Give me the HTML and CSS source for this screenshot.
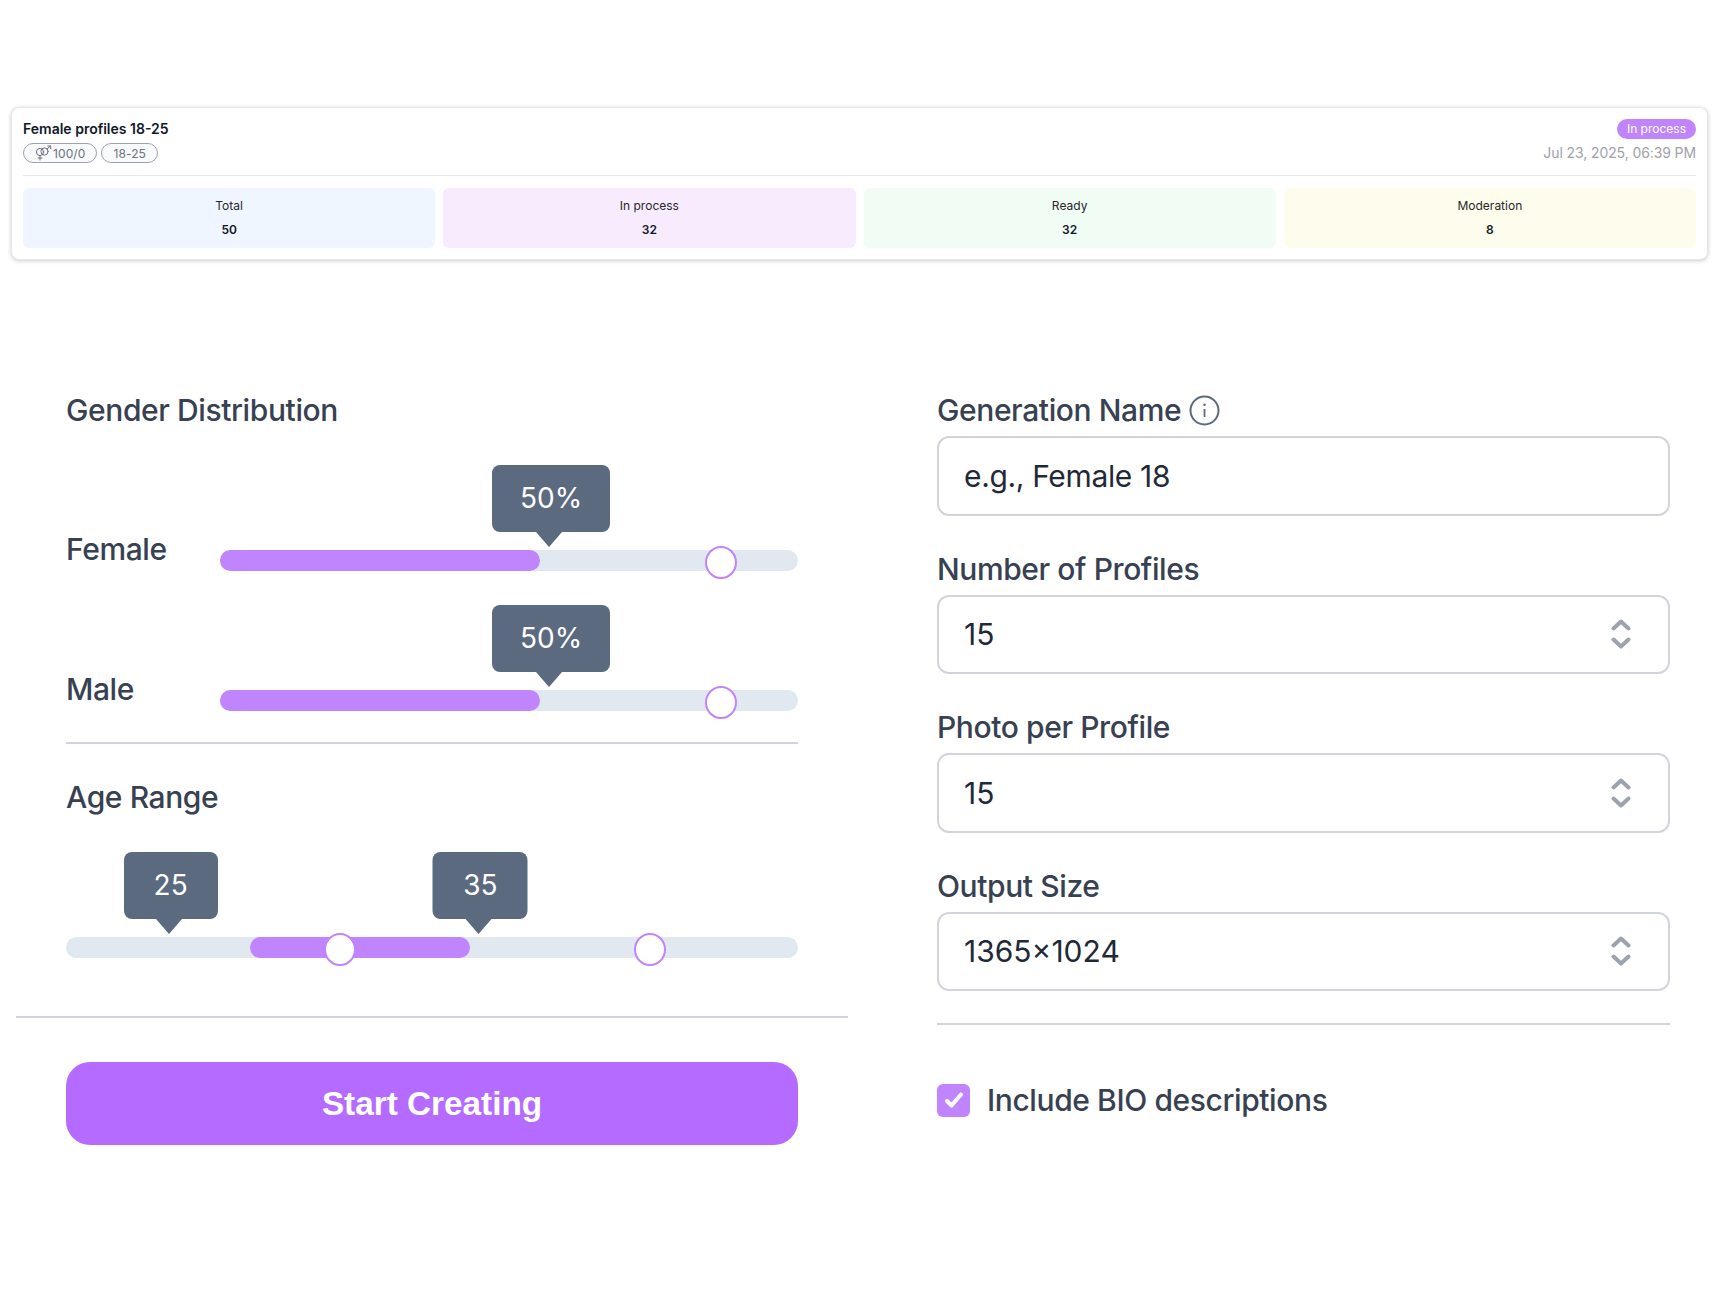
FILE: index.html
```html
<!DOCTYPE html>
<html lang="en">
<head>
	<meta charset="UTF-8">
	<title>Generation</title>
	<link rel="stylesheet" href="styles.css">
</head>
<body>
	<div class="card">
		<div class="card-head">
			<div class="card-info">
				<div class="card-title">Female profiles 18-25</div>
				<div class="tags">
					<span class="tag">
						<svg class="tag-icon" width="17" height="16" viewBox="0 0 17 16" fill="none" stroke="currentColor" stroke-width="1" stroke-linecap="round">
							<circle cx="5" cy="7" r="3.6"/>
							<circle cx="9.5" cy="6.5" r="3.6"/>
							<path d="M5 10.6V15M3 13h4M12 4l3.5-3M12.8 1h2.9v2.8"/>
						</svg>100/0</span>
					<span class="tag">18-25</span>
				</div>
			</div>
			<div class="card-meta">
				<span class="badge">In process</span>
				<span class="date">Jul 23, 2025, 06:39 PM</span>
			</div>
		</div>
		<div class="stats">
			<div class="stat stat-blue"><span class="stat-label">Total</span><b class="stat-value">50</b></div>
			<div class="stat stat-purple"><span class="stat-label">In process</span><b class="stat-value">32</b></div>
			<div class="stat stat-green"><span class="stat-label">Ready</span><b class="stat-value">32</b></div>
			<div class="stat stat-yellow"><span class="stat-label">Moderation</span><b class="stat-value">8</b></div>
		</div>
	</div>

	<div class="form">
		<div class="form-left">
			<div class="heading">Gender Distribution</div>
			<div class="slider-row slider-first">
				<div class="slider-label">Female</div>
				<div class="track">
					<div class="fill" style="left:0;width:55.3%"></div>
					<div class="tip" style="left:57.3%;width:118px">50%</div>
					<div class="thumb" style="left:86.6%"></div>
				</div>
			</div>
			<div class="slider-row slider-second">
				<div class="slider-label">Male</div>
				<div class="track">
					<div class="fill" style="left:0;width:55.3%"></div>
					<div class="tip" style="left:57.3%;width:118px">50%</div>
					<div class="thumb" style="left:86.6%"></div>
				</div>
			</div>
			<div class="line gender-line"></div>

			<div class="heading age-heading">Age Range</div>
			<div class="track age-track">
				<div class="fill" style="left:25.1%;width:30.1%"></div>
				<div class="tip" style="left:14.3%;width:94px">25</div>
				<div class="tip" style="left:56.6%;width:95px">35</div>
				<div class="thumb" style="left:37.4%"></div>
				<div class="thumb" style="left:79.8%"></div>
			</div>
			<div class="line wide-line"></div>
			<button class="start-btn">Start Creating</button>
		</div>

		<div class="form-right">
			<div class="field">
				<label class="field-label">Generation Name
					<svg class="info" width="31" height="31" viewBox="0 0 31 31" fill="none" stroke="#5b6a7f" stroke-width="2">
						<circle cx="15.5" cy="15.5" r="14"/>
						<path d="M15.5 14v8" stroke-width="1.8"/>
						<circle cx="15.5" cy="9.7" r="1.2" fill="#5b6a7f" stroke="none"/>
					</svg>
				</label>
				<div class="input input-name">e.g., Female 18</div>
			</div>
			<div class="field">
				<label class="field-label">Number of Profiles</label>
				<div class="input">15
					<svg class="updown" width="20" height="32" viewBox="0 0 20 32" fill="none" stroke="#9ca3af" stroke-width="4" stroke-linecap="round" stroke-linejoin="round"><path d="M2.5 10.5L10 3.5l7.5 7M2.5 21.5l7.5 7 7.5-7"/></svg>
				</div>
			</div>
			<div class="field">
				<label class="field-label">Photo per Profile</label>
				<div class="input">15
					<svg class="updown" width="20" height="32" viewBox="0 0 20 32" fill="none" stroke="#9ca3af" stroke-width="4" stroke-linecap="round" stroke-linejoin="round"><path d="M2.5 10.5L10 3.5l7.5 7M2.5 21.5l7.5 7 7.5-7"/></svg>
				</div>
			</div>
			<div class="field">
				<label class="field-label">Output Size</label>
				<div class="input">1365×1024
					<svg class="updown" width="20" height="32" viewBox="0 0 20 32" fill="none" stroke="#9ca3af" stroke-width="4" stroke-linecap="round" stroke-linejoin="round"><path d="M2.5 10.5L10 3.5l7.5 7M2.5 21.5l7.5 7 7.5-7"/></svg>
				</div>
			</div>
			<div class="line right-line"></div>
			<div class="check-row">
				<span class="check">
					<svg width="24" height="24" viewBox="0 0 24 24" fill="none" stroke="#fff" stroke-width="4" stroke-linecap="round" stroke-linejoin="round"><path d="M5 13l4.5 4.5L19 6.5"/></svg>
				</span>
				Include BIO descriptions
			</div>
		</div>
	</div>
</body>
</html>
```

FILE: styles.css
```css
*{padding: 0;margin: 0;box-sizing: border-box;}
html,body{
	background: #fff;
	font-family: Inter, "Noto Sans", sans-serif;
	color: #374151;
}
body{
	height: 1295px;
	overflow: hidden;
	padding-top: 107px;
}

/* top card */
.card{
	margin: 0 12px 0 11px;
	height: 153px;
	padding: 11px 11px 0;
	background: #fff;
	border: 1px solid #e5e7eb;
	border-radius: 8px;
	box-shadow: 0 1px 4px rgba(0,0,0,.2);
}
.card-head{
	display: flex;
	justify-content: space-between;
	height: 57px;
	border-bottom: 1px solid #e5e7eb;
}
.card-title{
	font-size: 14px;
	font-weight: 600;
	line-height: 20px;
	color: #111827;
}
.tags{
	display: flex;
	gap: 4px;
	margin-top: 4px;
}
.tag{
	display: flex;
	align-items: center;
	height: 20px;
	padding: 0 11px;
	font-size: 12px;
	letter-spacing: .1px;
	color: #6b7280;
	background: #f9fafb;
	border: 1px solid #9ca3af;
	border-radius: 10px;
}
.tag-icon{
	margin-right: 1px;
}
.card-meta{
	display: flex;
	flex-direction: column;
	align-items: flex-end;
	gap: 4px;
}
.badge{
	height: 20px;
	padding: 0 10px;
	font-size: 12px;
	line-height: 20px;
	color: #fff;
	background: #c084fc;
	border-radius: 10px;
}
.date{
	font-size: 14px;
	line-height: 20px;
	letter-spacing: -.1px;
	color: #a1a1aa;
}
.stats{
	display: grid;
	grid-template-columns: repeat(4, 1fr);
	gap: 8px;
	margin-top: 12px;
}
.stat{
	display: flex;
	flex-direction: column;
	align-items: center;
	gap: 8px;
	height: 60px;
	padding-top: 10px;
	border-radius: 6px;
	font-size: 12px;
	line-height: 16px;
}
.stat-label{
	color: #27272a;
}
.stat-value{
	font-weight: 600;
	color: #111827;
}
.stat-blue{background: #f0f6ff;}
.stat-purple{background: #f7ebfd;}
.stat-green{background: #f1fcf5;}
.stat-yellow{background: #fefcec;}

/* form */
.form{
	display: grid;
	grid-template-columns: 832px 733px;
	gap: 89px;
	margin: 132px 0 0 16px;
}
.form-left{
	padding: 0 50px;
}
.heading,.field-label,.slider-label,.check-row{
	font-size: 30px;
	font-weight: 500;
	line-height: 36px;
	letter-spacing: -.4px;
	color: #374151;
}
.age-heading{
	margin-top: 35px;
}
.slider-row{
	display: flex;
	justify-content: space-between;
	height: 39px;
}
.slider-first{
	margin-top: 104px;
}
.slider-second{
	margin-top: 100.5px;
}
.slider-label{
	margin-top: -1px;
}
.slider-row .track{
	align-self: flex-end;
	width: 578px;
}

.track{
	position: relative;
	height: 21px;
	background: #e2e8f0;
	border-radius: 11px;
}
.age-track{
	margin-top: 122px;
}
.fill{
	position: absolute;
	top: 0;
	bottom: 0;
	background: #c084fc;
	border-radius: 11px;
}
.thumb{
	position: absolute;
	top: -4px;
	width: 32px;
	height: 33px;
	margin-left: -16px;
	background: #fff;
	border: 2px solid #c084fc;
	border-radius: 50%;
}
.tip{
	position: absolute;
	bottom: 39px;
	height: 67px;
	transform: translateX(-50%);
	font-size: 28px;
	line-height: 67px;
	text-align: center;
	color: #fff;
	background: #5b6a7f;
	border-radius: 8px;
}
.tip:after{
	content: "";
	position: absolute;
	top: 100%;
	left: 50%;
	margin-left: -15px;
	border-top: 15px solid #5b6a7f;
	border-left: 13px solid transparent;
	border-right: 13px solid transparent;
}
.line{
	height: 2px;
	background: #d1d5db;
}
.gender-line{
	margin-top: 31.5px;
}
.wide-line{
	margin: 58px -50px 0;
}
.start-btn{
	display: block;
	width: 100%;
	height: 83px;
	margin-top: 44px;
	font-family: "Liberation Sans", Arial, sans-serif;
	font-size: 33.3px;
	font-weight: 700;
	color: #fff;
	background: #b56bff;
	border: 0;
	border-radius: 24px;
}

.field{
	margin-bottom: 35px;
}
.field-label{
	display: flex;
	align-items: center;
	gap: 8px;
	margin-bottom: 8px;
}
.input{
	display: flex;
	align-items: center;
	justify-content: space-between;
	height: 79.5px;
	padding: 0 37px 0 25px;
	font-size: 30px;
	color: #1f2937;
	background: #fff;
	border: 2px solid #d1d5db;
	border-radius: 12px;
}
.input-name{
	letter-spacing: -.35px;
}
.right-line{
	margin-top: -3.5px;
}
.check-row{
	display: flex;
	align-items: center;
	gap: 17px;
	margin-top: 57.5px;
}
.check{
	display: flex;
	align-items: center;
	justify-content: center;
	width: 33px;
	height: 33px;
	background: #c084fc;
	border-radius: 6px;
}
```
